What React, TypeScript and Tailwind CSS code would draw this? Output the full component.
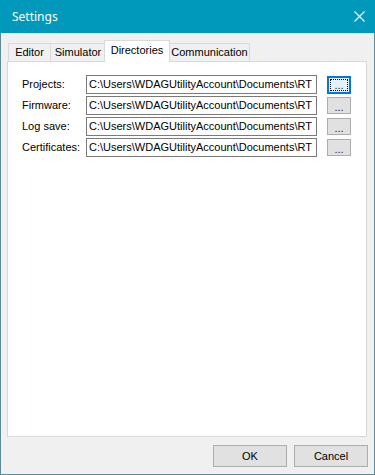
import React from 'react';

const PATH = 'C:\\Users\\WDAGUtilityAccount\\Documents\\RT';

const rows = [
  { label: 'Projects:', focused: true },
  { label: 'Firmware:', focused: false },
  { label: 'Log save:', focused: false },
  { label: 'Certificates:', focused: false },
];

const tabs = [
  { name: 'Editor', width: 'w-[43px]', ml: 'ml-[1px]' },
  { name: 'Simulator', width: 'w-[56px]', ml: '-ml-[1px]' },
  { name: 'Directories', width: 'w-[66px]', ml: '-ml-[2px]', active: true },
  { name: 'Communication', width: 'w-[81px]', ml: '-ml-[1px]' },
];

const BrowseButton = ({ focused }: { focused: boolean }) => {
  if (focused) {
    return (
      <button className="w-[24px] h-[18px] border-2 border-[#0078d7] bg-[#e5f1fb] p-[1px] flex">
        <span className="flex-1 border border-dotted border-black flex items-end justify-center leading-[10px] text-[11px] text-[#1a1a4a]">
          ...
        </span>
      </button>
    );
  }
  return (
    <button className="w-[24px] h-[17px] border border-[#adadad] bg-[#e1e1e1] flex items-end justify-center pb-[1px] leading-[10px] text-[11px] text-[#1a1a4a]">
      ...
    </button>
  );
};

export default function App() {
  return (
    <div
      className="w-[375px] h-[475px] flex flex-col bg-[#f0f0f0] text-black"
      style={{ fontFamily: '"Liberation Sans", Arial, sans-serif' }}
    >
      {/* Title bar */}
      <div className="h-[33px] shrink-0 bg-[#0099bc] flex items-center justify-between pl-[12px] pr-[10px]">
        <span className="text-white text-[12px]" style={{ fontFamily: '"Noto Sans", sans-serif' }}>
          Settings
        </span>
        <svg width="11" height="11" viewBox="0 0 11 11" className="block">
          <path d="M0.5 0.5 L10.5 10.5 M10.5 0.5 L0.5 10.5" stroke="#ffffff" strokeWidth="1.1" />
        </svg>
      </div>

      {/* Body */}
      <div className="flex-1 flex flex-col border-x border-b border-[#5b8a99] text-[11px]">
        {/* Tab strip */}
        <div className="mt-[7px] h-[21px] pl-[6px] flex items-end">
          {tabs.map((t) =>
            t.active ? (
              <div
                key={t.name}
                className={`${t.width} ${t.ml} h-[22px] -mb-[1px] relative z-10 bg-white border border-b-0 border-[#d9d9d9] flex items-center justify-center pb-[2px]`}
              >
                {t.name}
              </div>
            ) : (
              <div
                key={t.name}
                className={`${t.width} ${t.ml} h-[18px] bg-[#f0f0f0] border border-b-0 border-[#d9d9d9] flex items-center justify-center`}
              >
                {t.name}
              </div>
            )
          )}
        </div>

        {/* Tab panel */}
        <div className="ml-[6px] w-[360px] h-[376px] bg-white border border-[#d9d9d9] pt-[13px] pl-[14px] flex flex-col gap-[2px]">
          {rows.map((r) => (
            <div key={r.label} className="h-[19px] flex items-center">
              <span className="w-[64px] shrink-0">{r.label}</span>
              <div className="w-[231px] h-[19px] border border-[#7a7a7a] bg-white overflow-hidden whitespace-nowrap pl-[2px] leading-[17px]">
                {PATH}
              </div>
              <div className="ml-[10px] flex items-center">
                <BrowseButton focused={r.focused} />
              </div>
            </div>
          ))}
        </div>

        {/* Dialog buttons */}
        <div className="mt-[8px] pr-[6px] flex justify-end gap-[7px]">
          <button className="w-[74px] h-[22px] border border-[#adadad] bg-[#e1e1e1] text-[11px]">OK</button>
          <button className="w-[74px] h-[22px] border border-[#adadad] bg-[#e1e1e1] text-[11px]">Cancel</button>
        </div>
      </div>
    </div>
  );
}
